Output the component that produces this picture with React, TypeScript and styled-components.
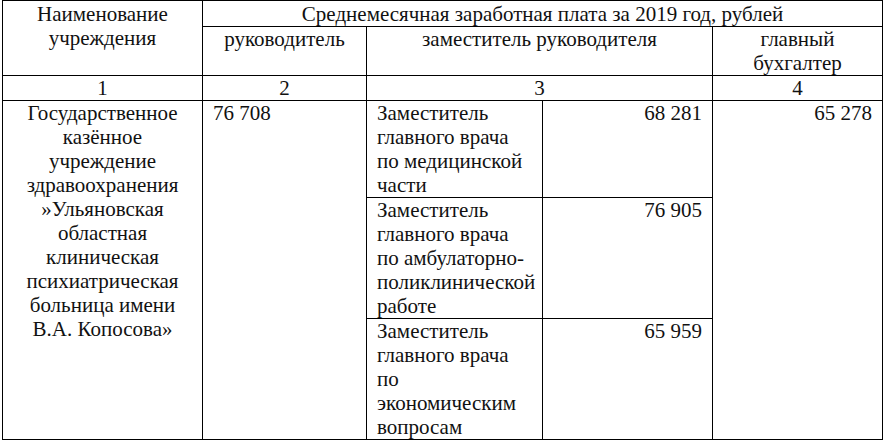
import React from 'react';
import styled, { createGlobalStyle } from 'styled-components';

const GlobalStyle = createGlobalStyle`
  html, body {
    margin: 0;
    padding: 0;
    background: #ffffff;
  }
`;

const line = '1px solid #000';
const serif = "'Liberation Serif', 'Times New Roman', serif";

const Page = styled.div`
  padding: 0 0 0 2px;
`;

const Table = styled.table`
  border-collapse: collapse;
  table-layout: fixed;
  width: 880px;
  font-family: ${serif};
  font-size: 21px;
  line-height: 24px;
  color: #111;
`;

const Cell = styled.td<{ align?: 'left' | 'center' | 'right' }>`
  border: ${line};
  padding: 0 10px;
  vertical-align: top;
  font-family: ${serif};
  font-size: 21px;
  line-height: 24px;
  color: #111;
  text-align: ${(p) => p.align ?? 'left'};
  white-space: nowrap;
`;

const HeadCell = styled(Cell)`
  text-align: center;
  padding: 0 4px;
`;

const TitleCell = styled(HeadCell)`
  padding-top: 1px;
`;

const NumRow = styled.tr`
  height: 23px;
`;

const columns = [200, 164, 176, 170, 170];

const deputies = [
  { lines: ['Заместитель', 'главного врача', 'по медицинской', 'части'], salary: '68 281' },
  {
    lines: ['Заместитель', 'главного врача', 'по амбулаторно-', 'поликлинической', 'работе'],
    salary: '76 905',
  },
  {
    lines: ['Заместитель', 'главного врача', 'по', 'экономическим', 'вопросам'],
    salary: '65 959',
  },
];

const institution = [
  'Государственное',
  'казённое',
  'учреждение',
  'здравоохранения',
  '»Ульяновская',
  'областная',
  'клиническая',
  'психиатрическая',
  'больница имени',
  'В.А. Копосова»',
];

const Lines = ({ items }: { items: string[] }) => (
  <>
    {items.map((t, i) => (
      <React.Fragment key={i}>
        {t}
        {i < items.length - 1 && <br />}
      </React.Fragment>
    ))}
  </>
);

export default function App() {
  return (
    <Page>
      <GlobalStyle />
      <Table>
        <colgroup>
          {columns.map((w, i) => (
            <col key={i} style={{ width: w }} />
          ))}
        </colgroup>
        <thead>
          <tr>
            <TitleCell rowSpan={2}>
              Наименование
              <br />
              учреждения
            </TitleCell>
            <TitleCell colSpan={4}>Среднемесячная заработная плата за 2019 год, рублей</TitleCell>
          </tr>
          <tr>
            <HeadCell>руководитель</HeadCell>
            <HeadCell colSpan={2}>заместитель руководителя</HeadCell>
            <HeadCell>
              главный
              <br />
              бухгалтер
            </HeadCell>
          </tr>
          <NumRow>
            <HeadCell>1</HeadCell>
            <HeadCell>2</HeadCell>
            <HeadCell colSpan={2}>3</HeadCell>
            <HeadCell>4</HeadCell>
          </NumRow>
        </thead>
        <tbody>
          {deputies.map((d, i) => (
            <tr key={i}>
              {i === 0 && (
                <Cell rowSpan={3} align="center">
                  <Lines items={institution} />
                </Cell>
              )}
              {i === 0 && <Cell rowSpan={3}>76 708</Cell>}
              <Cell>
                <Lines items={d.lines} />
              </Cell>
              <Cell align="right">{d.salary}</Cell>
              {i === 0 && (
                <Cell rowSpan={3} align="right">
                  65 278
                </Cell>
              )}
            </tr>
          ))}
        </tbody>
      </Table>
    </Page>
  );
}
